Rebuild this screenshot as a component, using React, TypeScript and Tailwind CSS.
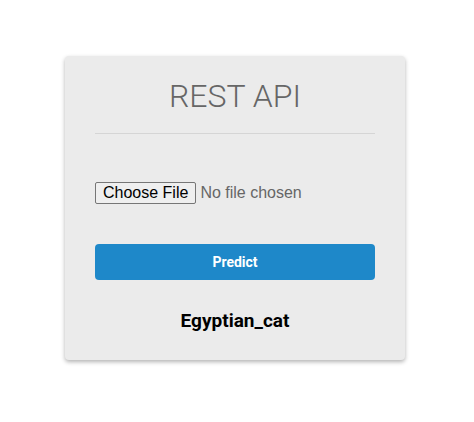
export default function App() {
  return (
    <div className="min-h-screen bg-white pt-[56px] font-['Roboto',sans-serif]">
      <div className="ml-[65px] w-[340px] h-[304px] rounded-[4px] bg-[#ebebeb] px-[30px] pt-[18px] shadow-[0_2px_4px_rgba(0,0,0,0.3)]">
        <h1 className="text-center text-[32px] font-light leading-[44px] text-[#666666]">REST API</h1>
        <hr className="mt-[15px] border-0 border-t border-[#d5d5d5]" />

        <div className="mt-[47px] h-[24px]">
          <input
            type="file"
            className="font-['Liberation_Sans',Arial,sans-serif] text-[16px] leading-[normal] text-[#666666] file:mr-[4px] file:rounded-[2px] file:border file:border-[#767676] file:bg-[#efefef] file:px-[7px] file:py-[1px] file:text-black"
          />
        </div>

        <button className="mt-[39px] block h-[36px] w-full rounded-[4px] bg-[#1e88c9] text-[14px] font-bold text-white">
          Predict
        </button>

        <p className="mt-[27px] text-center text-[19px] leading-[28px] font-bold text-black">Egyptian_cat</p>
      </div>
    </div>
  );
}
